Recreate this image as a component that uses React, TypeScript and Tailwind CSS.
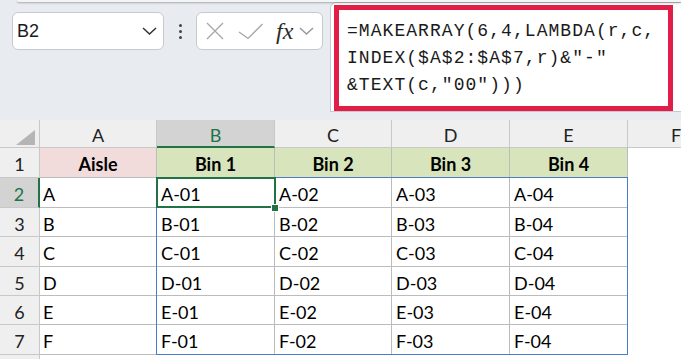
import React from "react";

const cellFont = { fontFamily: "Lato, 'Open Sans', sans-serif" };

const cols = ["A", "B", "C", "D", "E", "F"];
const rowHeights = ["h-[30px]", "h-[29px]", "h-[30px]", "h-[29px]", "h-[29px]", "h-[30px]"];
const aisles = ["A", "B", "C", "D", "E", "F"];

function Chevron({ className }: { className?: string }) {
  return (
    <svg width="15" height="8" viewBox="0 0 15 8" className={className}>
      <path d="M1 1 L7.5 7 L14 1" fill="none" stroke="currentColor" strokeWidth="1.5" />
    </svg>
  );
}

function Toolbar() {
  return (
    <div className="relative flex h-[120px] bg-[#e8ecf0]">
      <div className="absolute left-[17px] right-0 top-0 h-[2px] rounded-bl-[4px] bg-[#f4f5f7] shadow-[0_1px_2px_rgba(0,0,0,0.3)]" />
      <div className="flex items-start pl-[12px] pt-[12px]">
        <div className="flex h-[38px] w-[152px] items-center justify-between rounded-[6px] border border-[#c6cace] bg-white pl-[4px] pr-[6px]">
          <span className="text-[18px] text-[#1a1a1a]" style={{ fontFamily: "'Liberation Sans', Arial, sans-serif" }}>
            B2
          </span>
          <Chevron className="text-[#333]" />
        </div>
        <div className="flex h-[38px] w-[32px] flex-col items-center justify-center gap-[3px]">
          <span className="h-[3px] w-[3px] rounded-full bg-[#444]" />
          <span className="h-[3px] w-[3px] rounded-full bg-[#444]" />
          <span className="h-[3px] w-[3px] rounded-full bg-[#444]" />
        </div>
        <div className="flex h-[38px] w-[127px] items-center rounded-[6px] border border-[#c6cace] bg-white pl-[9px]">
          <svg width="18" height="18" viewBox="0 0 18 18">
            <path d="M1 1 L17 17 M17 1 L1 17" stroke="#a6a6a6" strokeWidth="1.3" />
          </svg>
          <svg width="26" height="17" viewBox="0 0 26 17" className="ml-[14px]">
            <path d="M1 9 L10 15.5 L24.5 1" fill="none" stroke="#a6a6a6" strokeWidth="1.3" />
          </svg>
          <span
            className="ml-[12px] text-[24px] italic leading-none text-[#2b2b2b]"
            style={{ fontFamily: "'Liberation Serif', 'DejaVu Serif', serif" }}
          >
            fx
          </span>
          <Chevron className="ml-[6px] text-[#9a9a9a]" />
        </div>
      </div>
      <div className="ml-auto mt-[2px] h-[110px] w-[351px] rounded-tl-[6px] border border-r-0 border-[#c6cace] bg-white pl-[3px] pt-[2px]">
        <div
          className="h-[106px] w-[339px] border-[5px] border-[#e11d48] pl-[8px] pt-[8px] text-[18px] leading-[27px] tracking-[1.05px] text-[#1a1a1a]"
          style={{ fontFamily: "'Liberation Mono', 'DejaVu Sans Mono', monospace" }}
        >
          <div>=MAKEARRAY(6,4,LAMBDA(r,c,</div>
          <div>INDEX($A$2:$A$7,r)&amp;"-"</div>
          <div>&amp;TEXT(c,"00")))</div>
        </div>
      </div>
    </div>
  );
}

function Sheet() {
  return (
    <div className="relative grid grid-cols-[40px_117px_118px_117px_118px_118px_1fr] bg-white" style={cellFont}>
      {/* column headers */}
      <div className="relative h-[28px] border-b border-r border-[#c8c8c8] bg-[#efefef]">
        <svg width="20" height="16" viewBox="0 0 20 16" className="absolute left-[16px] top-[10px]">
          <path d="M19 0 L19 15 L0 15 Z" fill="#b5b5b5" />
        </svg>
      </div>
      {cols.map((c) =>
        c === "B" ? (
          <div
            key={c}
            className="flex h-[28px] items-center justify-center border-b-2 border-r border-b-[#217346] border-r-[#c8c8c8] bg-[#d3d3d3] pt-[4px] text-[18px] text-[#217346]"
          >
            {c}
          </div>
        ) : c === "F" ? (
          <div
            key={c}
            className="flex h-[28px] items-center border-b border-[#c8c8c8] bg-[#efefef] pl-[43px] pt-[4px] text-[18px] text-[#222]"
          >
            {c}
          </div>
        ) : (
          <div
            key={c}
            className="flex h-[28px] items-center justify-center border-b border-r border-[#c8c8c8] bg-[#efefef] pt-[4px] text-[18px] text-[#222]"
          >
            {c}
          </div>
        )
      )}

      {/* row 1 */}
      <div className="flex h-[30px] items-center justify-center border-b border-r border-[#c8c8c8] bg-[#efefef] pt-[3px] text-[18px] text-[#222]">
        1
      </div>
      <div className="flex h-[30px] items-center justify-center border-b border-r border-[#bcbcbc] bg-[#f2dcdb] pt-[3px] text-[18px] font-bold text-black">
        Aisle
      </div>
      {["Bin 1", "Bin 2", "Bin 3", "Bin 4"].map((b) => (
        <div
          key={b}
          className="flex h-[30px] items-center justify-center border-b border-r border-[#bcbcbc] bg-[#d8e4bc] pt-[3px] text-[18px] font-bold text-black"
        >
          {b}
        </div>
      ))}
      <div className="h-[30px]" />

      {/* data rows */}
      {aisles.map((a, i) => {
        const h = rowHeights[i];
        const active = i === 0;
        return (
          <React.Fragment key={a}>
            <div
              className={`flex ${h} items-center justify-center border-b border-[#c8c8c8] pt-[4px] text-[18px] ${
                active
                  ? "border-r-2 border-r-[#217346] bg-[#d3d3d3] text-[#217346]"
                  : "border-r bg-[#efefef] text-[#222]"
              }`}
            >
              {i + 2}
            </div>
            <div className={`flex ${h} items-center border-b border-r border-[#bcbcbc] pl-[3px] pt-[4px] text-[18px] text-black`}>
              {a}
            </div>
            {[1, 2, 3, 4].map((n) => (
              <div
                key={n}
                className={`flex ${h} items-center border-b border-r border-[#bcbcbc] pl-[4px] pt-[4px] text-[18px] text-black`}
              >
                {a}-0{n}
              </div>
            ))}
            <div className={h} />
          </React.Fragment>
        );
      })}
      <div className="h-[10px] border-r border-[#c8c8c8] bg-[#efefef]" />

      {/* selection range */}
      <div className="pointer-events-none absolute left-[156px] top-[57px] h-[178px] w-[472px] border-[1.5px] border-[#4a7cc7]" />
      {/* active cell */}
      <div className="pointer-events-none absolute left-[156px] top-[57px] h-[31px] w-[120px] border-2 border-[#217346]" />
      <div className="pointer-events-none absolute left-[271px] top-[84px] h-[8px] w-[8px] border border-white bg-[#217346]" />
    </div>
  );
}

export default function App() {
  return (
    <div className="h-[359px] w-[681px] overflow-hidden bg-white">
      <Toolbar />
      <Sheet />
    </div>
  );
}
